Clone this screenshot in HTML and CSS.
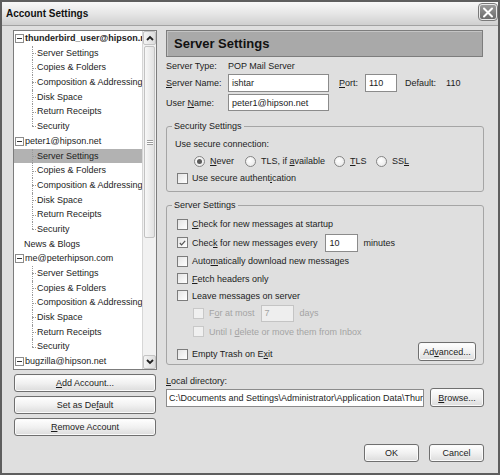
FILE: index.html
```html
<!DOCTYPE html>
<html>
<head>
<meta charset="utf-8">
<title>Account Settings</title>
<link rel="stylesheet" href="styles.css">
</head>
<body>
<div class="window">
  <div class="titlebar">
    <span class="title">Account Settings</span>
    <span class="close"><svg width="12" height="11" viewBox="0 0 12 11"><path d="M2 1.5 L10 9.5 M10 1.5 L2 9.5" stroke="#fff" stroke-width="2" stroke-linecap="round"/></svg></span>
  </div>
  <div class="content">
    <div class="left">
      <div class="tree">
        <div class="tree-list">
          <div class="acct bold"><span class="exp"><svg width="9" height="9" viewBox="0 0 9 9"><rect x="0.5" y="0.5" width="8" height="8" fill="#fff" stroke="#8c8c8c"/><path d="M2 4.5 H7" stroke="#333"/></svg></span><span>thunderbird_user@hipson.net</span></div>
          <ul class="kids">
            <li>Server Settings</li>
            <li>Copies &amp; Folders</li>
            <li>Composition &amp; Addressing</li>
            <li>Disk Space</li>
            <li>Return Receipts</li>
            <li>Security</li>
          </ul>
          <div class="acct"><span class="exp"><svg width="9" height="9" viewBox="0 0 9 9"><rect x="0.5" y="0.5" width="8" height="8" fill="#fff" stroke="#8c8c8c"/><path d="M2 4.5 H7" stroke="#333"/></svg></span><span>peter1@hipson.net</span></div>
          <ul class="kids">
            <li class="sel">Server Settings</li>
            <li>Copies &amp; Folders</li>
            <li>Composition &amp; Addressing</li>
            <li>Disk Space</li>
            <li>Return Receipts</li>
            <li>Security</li>
          </ul>
          <div class="acct plain">News &amp; Blogs</div>
          <div class="acct"><span class="exp"><svg width="9" height="9" viewBox="0 0 9 9"><rect x="0.5" y="0.5" width="8" height="8" fill="#fff" stroke="#8c8c8c"/><path d="M2 4.5 H7" stroke="#333"/></svg></span><span>me@peterhipson.com</span></div>
          <ul class="kids">
            <li>Server Settings</li>
            <li>Copies &amp; Folders</li>
            <li>Composition &amp; Addressing</li>
            <li>Disk Space</li>
            <li>Return Receipts</li>
            <li>Security</li>
          </ul>
          <div class="acct"><span class="exp"><svg width="9" height="9" viewBox="0 0 9 9"><rect x="0.5" y="0.5" width="8" height="8" fill="#fff" stroke="#8c8c8c"/><path d="M2 4.5 H7" stroke="#333"/></svg></span><span>bugzilla@hipson.net</span></div>
        </div>
        <div class="vscroll">
          <div class="sb-btn"><svg width="8" height="6" viewBox="0 0 8 6"><path d="M1 5 L4 2 L7 5" fill="none" stroke="#222" stroke-width="1.8"/></svg></div>
          <div class="sb-track">
            <div class="sb-thumb"><span class="grip"></span></div>
          </div>
          <div class="sb-btn"><svg width="8" height="6" viewBox="0 0 8 6"><path d="M1 1 L4 4 L7 1" fill="none" stroke="#222" stroke-width="1.8"/></svg></div>
        </div>
      </div>
      <div class="acct-buttons">
        <button class="btn"><span><u>A</u>dd Account...</span></button>
        <button class="btn"><span>Set as De<u>f</u>ault</span></button>
        <button class="btn"><span><u>R</u>emove Account</span></button>
      </div>
    </div>

    <div class="pane">
      <div class="pane-head">Server Settings</div>
      <div class="info">
        <span class="lbl">Server Type:</span><span class="val">POP Mail Server</span>
        <span class="lbl"><u>S</u>erver Name:</span>
        <div class="inline">
          <span class="field w-name">ishtar</span>
          <span class="port-lbl"><u>P</u>ort:</span>
          <span class="field w-port">110</span>
          <span class="def-lbl">Default:</span>
          <span class="def-val">110</span>
        </div>
        <span class="lbl">User <u>N</u>ame:</span>
        <div class="inline"><span class="field w-name">peter1@hipson.net</span></div>
      </div>

      <fieldset class="group sec">
        <legend>Security Settings</legend>
        <div class="line">Use secure connection:</div>
        <div class="radios">
          <span class="radio-item"><span class="radio on"></span><span><u>N</u>ever</span></span>
          <span class="radio-item"><span class="radio"></span><span>TLS, if <u>a</u>vailable</span></span>
          <span class="radio-item"><span class="radio"></span><span><u>T</u>LS</span></span>
          <span class="radio-item"><span class="radio"></span><span>SS<u>L</u></span></span>
        </div>
        <div class="cb-row auth"><span class="cb"></span><span>Use secure authent<u>i</u>cation</span></div>
      </fieldset>

      <fieldset class="group srv">
        <legend>Server Settings</legend>
        <div class="cb-row r1"><span class="cb"></span><span><u>C</u>heck for new messages at startup</span></div>
        <div class="cb-row r2"><span class="cb checked"><svg width="10" height="10" viewBox="0 0 10 10"><path d="M2 5 L4 7.2 L8 2.6" fill="none" stroke="#555" stroke-width="1.3"/></svg></span><span>Chec<u>k</u> for new messages every</span><span class="field w-min">10</span><span class="after">minutes</span></div>
        <div class="cb-row r3"><span class="cb"></span><span>Auto<u>m</u>atically download new messages</span></div>
        <div class="cb-row r4"><span class="cb"></span><span><u>F</u>etch headers only</span></div>
        <div class="cb-row r5"><span class="cb"></span><span>Leave messa<u>g</u>es on server</span></div>
        <div class="cb-row sub r6 disabled"><span class="cb"></span><span>F<u>o</u>r at most</span><span class="field w-days">7</span><span class="after">days</span></div>
        <div class="cb-row sub r7 disabled"><span class="cb"></span><span>Until I <u>d</u>elete or move them from Inbox</span></div>
        <div class="cb-row last"><span class="cb-label"><span class="cb"></span><span>Empty Trash on E<u>x</u>it</span></span><button class="btn adv"><span>Ad<u>v</u>anced...</span></button></div>
      </fieldset>

      <div class="local-lbl"><u>L</u>ocal directory:</div>
      <div class="local-row">
        <span class="field w-dir"><span class="dir-text">C:\Documents and Settings\Administrator\Application Data\Thur</span></span>
        <button class="btn browse"><span><u>B</u>rowse...</span></button>
      </div>

      <div class="footer">
        <button class="btn dlg"><span>OK</span></button>
        <button class="btn dlg"><span>Cancel</span></button>
      </div>
    </div>
  </div>
</div>
</body>
</html>
```

FILE: styles.css
```css
* { box-sizing: border-box; }
html, body { margin: 0; padding: 0; }
body {
  width: 500px;
  height: 475px;
  background: #dedede;
  font-family: "Liberation Sans", Arial, sans-serif;
  font-size: 9px;
  color: #1c1c1c;
  overflow: hidden;
}
u { text-decoration: underline; text-underline-offset: 1px; }

.window {
  width: 500px;
  height: 475px;
  border: 2px solid #5e5e5e;
  background: #dfdfdf;
  display: flex;
  flex-direction: column;
}

.titlebar {
  height: 24px;
  flex: none;
  display: flex;
  justify-content: space-between;
  padding: 0 1px 0 4px;
  background: linear-gradient(#f8f8f8, #e6e6e6 50%, #cfcfcf);
  border-bottom: 1px solid #a2a2a2;
}
.title {
  font-size: 10px;
  font-weight: bold;
  color: #111;
  line-height: 23px;
}
.close {
  width: 18px;
  height: 16px;
  margin-top: 2px;
  border: 1px solid #e9e9e9;
  outline: 1px solid #7a7a7a;
  border-radius: 3px;
  background: linear-gradient(#9a9a9a, #6c6c6c);
  display: flex;
  align-items: center;
  justify-content: center;
}

.content {
  flex: 1;
  display: grid;
  grid-template-columns: 144px 318px;
  column-gap: 9px;
  padding: 4px 0 11px 11px;
  min-height: 0;
}

/* ---------- left column ---------- */
.left { display: flex; flex-direction: column; }
.tree {
  height: 340px;
  border: 1px solid #7c7c7c;
  background: #fff;
  display: flex;
}
.tree-list {
  flex: 1;
  overflow: hidden;
  min-width: 0;
}
.acct {
  height: 14.7px;
  line-height: 14.7px;
  display: flex;
  align-items: center;
  white-space: nowrap;
  padding-left: 1px;
}
.acct.bold { font-weight: bold; }
.acct.plain { padding-left: 10px; }
.exp { width: 9px; height: 9px; display: flex; margin-right: 1px; flex: none; }
.exp svg { display: block; }

.kids { list-style: none; margin: 0; padding: 0; }
.kids li {
  position: relative;
  height: 14.7px;
  line-height: 14.7px;
  padding-left: 23px;
  white-space: nowrap;
}
.kids li::before {
  content: "";
  position: absolute;
  left: 18px;
  top: 0;
  bottom: 0;
  border-left: 1px dotted #9a9a9a;
}
.kids li:last-child::before { bottom: 50%; }
.kids li::after {
  content: "";
  position: absolute;
  left: 18px;
  top: 50%;
  width: 4px;
  border-top: 1px dotted #9a9a9a;
}
.kids li.sel { background: #b2b2b2; }

.vscroll {
  width: 14px;
  flex: none;
  display: flex;
  flex-direction: column;
  background: #f1f1f1;
  border-left: 1px solid #d6d6d6;
}
.sb-btn {
  height: 14px;
  flex: none;
  display: flex;
  align-items: center;
  justify-content: center;
  background: linear-gradient(90deg, #f4f4f4, #dcdcdc);
  border: 1px solid #c4c4c4;
  border-radius: 2px;
}
.sb-track { flex: 1; padding: 1px 0; }
.sb-thumb {
  height: 192px;
  margin: 0 1px;
  border: 1px solid #c2c2c2;
  border-radius: 2px;
  background: linear-gradient(90deg, #f7f7f7, #e2e2e2);
  display: flex;
  align-items: center;
  justify-content: center;
}
.grip {
  width: 6px;
  height: 5px;
  border-top: 1px solid #9c9c9c;
  border-bottom: 1px solid #9c9c9c;
  background: linear-gradient(#fff 0 1px, #9c9c9c 1px 2px, #fff 2px);
  background-size: 100% 2px;
}

.acct-buttons {
  margin-top: 4px;
  display: flex;
  flex-direction: column;
  gap: 4px;
  padding: 0 1px;
}

.btn {
  font-family: inherit;
  font-size: 9px;
  color: #1c1c1c;
  height: 18px;
  padding: 0;
  border: 1px solid #6f6f6f;
  border-radius: 3px;
  background: linear-gradient(#ffffff, #f1f1f1 50%, #dcdcdc);
  box-shadow: inset 0 0 0 1px #fafafa;
  display: flex;
  align-items: center;
  justify-content: center;
  white-space: nowrap;
}

/* ---------- right pane ---------- */
.pane { display: flex; flex-direction: column; min-width: 0; }
.pane-head {
  height: 27px;
  flex: none;
  background: #a9a9a9;
  border: 1px solid #7d7d7d;
  box-shadow: inset 1px 1px 0 #c4c4c4;
  font-size: 13px;
  font-weight: bold;
  color: #111;
  line-height: 25px;
  padding-left: 7px;
  margin-right: 1px;
}

.info {
  margin-top: 3px;
  display: grid;
  grid-template-columns: 62px auto;
  grid-template-rows: 12px 18px 17px;
  row-gap: 2px;
  align-items: center;
}
.inline { display: flex; align-items: center; }
.field {
  display: flex;
  align-items: center;
  background: #fff;
  border: 1px solid #8b8b8b;
  padding-left: 3px;
  white-space: nowrap;
  overflow: hidden;
  color: #1c1c1c;
}
.w-name { width: 101px; height: 17px; }
.info .inline:nth-of-type(1) .field { height: 18px; }
.port-lbl { margin-left: 10px; }
.w-port { width: 32px; height: 18px; margin-left: 7px; }
.def-lbl { margin-left: 8px; }
.def-val { margin-left: 10px; }

.group {
  margin: 9px 0 0;
  padding: 5px 7px 5px 8px;
  border: 1px solid #a5a5a5;
  border-radius: 3px;
  min-width: 0;
}
.group legend {
  padding: 0 2px;
  margin-left: -3px;
  line-height: 12px;
  color: #1c1c1c;
}
.sec { padding-top: 6px; padding-bottom: 6px; }
.line { height: 12px; line-height: 12px; }
.radios {
  margin-top: 5px;
  height: 12px;
  padding-left: 19px;
  display: grid;
  grid-template-columns: 51px 89px 42px auto;
  align-items: center;
}
.radio-item { display: flex; align-items: center; white-space: nowrap; }
.radio {
  width: 11px;
  height: 11px;
  border-radius: 50%;
  border: 1px solid #858585;
  background: radial-gradient(circle at 40% 40%, #ffffff, #e3e3e3);
  margin-right: 5px;
  flex: none;
  display: flex;
  align-items: center;
  justify-content: center;
}
.radio.on::after {
  content: "";
  width: 5px;
  height: 5px;
  border-radius: 50%;
  background: #5a5a5a;
}

.cb-row {
  display: flex;
  align-items: center;
  height: 18px;
  padding-left: 2px;
  white-space: nowrap;
}
.cb {
  width: 11px;
  height: 11px;
  border: 1px solid #7c7c7c;
  background: linear-gradient(135deg, #e4e4e4, #ffffff);
  margin-right: 4px;
  flex: none;
  display: flex;
  align-items: center;
  justify-content: center;
}
.cb svg { display: block; }
.sec .auth { margin-top: 4px; height: 14px; }

.srv { margin-top: 7px; padding-top: 4px; padding-bottom: 3px; }
.srv .r1 { height: 18px; }
.srv .r2 { height: 19px; }
.srv .r3 { height: 18px; }
.srv .r4 { height: 17px; }
.srv .r5 { height: 17px; }
.srv .r6 { height: 18px; }
.srv .r7 { height: 19px; }
.w-min { width: 33px; height: 18px; margin-left: 7px; padding-left: 4px; }
.after { margin-left: 6px; }
.sub { padding-left: 18px; }
.sub .cb { margin-right: 5px; }
.disabled { color: #a4a4a4; }
.disabled .cb { border-color: #c8c8c8; background: #f0f0f0; }
.w-days { width: 33px; height: 17px; margin-left: 6px; border-color: #c4c4c4; background: #eeeeee; color: #a4a4a4; }
.cb-row.last {
  height: 19px;
  margin-top: 1px;
  justify-content: space-between;
  align-items: flex-end;
}
.cb-label { display: flex; align-items: center; height: 14px; }
.adv { width: 58px; height: 19px; }

.local-lbl { margin-top: 10px; height: 12px; line-height: 12px; }
.local-row {
  margin-top: 1px;
  display: flex;
  align-items: center;
  gap: 6px;
}
.w-dir { width: 258px; height: 18px; padding-left: 2px; flex: none; }
.dir-text { display: block; overflow: hidden; white-space: nowrap; max-width: 100%; }
.browse { width: 54px; height: 19px; flex: none; }

.footer {
  margin-top: auto;
  display: flex;
  justify-content: flex-end;
  gap: 10px;
}
.dlg { width: 55px; height: 18px; }
```
